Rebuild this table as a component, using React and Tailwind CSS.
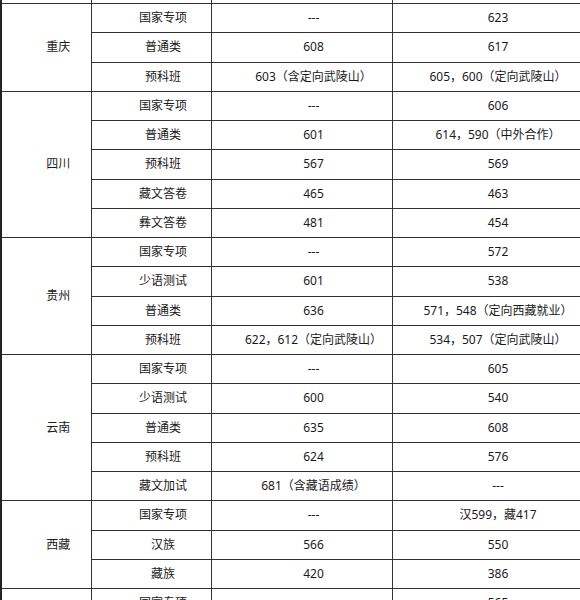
const groups = [
  { name: "", rows: [["", "", ""]] },
  {
    name: "重庆",
    rows: [
      ["国家专项", "---", "623"],
      ["普通类", "608", "617"],
      ["预科班", "603（含定向武陵山）", "605，600（定向武陵山）"],
    ],
  },
  {
    name: "四川",
    rows: [
      ["国家专项", "---", "606"],
      ["普通类", "601", "614，590（中外合作）"],
      ["预科班", "567", "569"],
      ["藏文答卷", "465", "463"],
      ["彝文答卷", "481", "454"],
    ],
  },
  {
    name: "贵州",
    rows: [
      ["国家专项", "---", "572"],
      ["少语测试", "601", "538"],
      ["普通类", "636", "571，548（定向西藏就业）"],
      ["预科班", "622，612（定向武陵山）", "534，507（定向武陵山）"],
    ],
  },
  {
    name: "云南",
    rows: [
      ["国家专项", "---", "605"],
      ["少语测试", "600", "540"],
      ["普通类", "635", "608"],
      ["预科班", "624", "576"],
      ["藏文加试", "681（含藏语成绩）", "---"],
    ],
  },
  {
    name: "西藏",
    rows: [
      ["国家专项", "---", "汉599，藏417"],
      ["汉族", "566", "550"],
      ["藏族", "420", "386"],
    ],
  },
  {
    name: "陕西",
    rows: [
      ["国家专项", "---", "565"],
      ["普通类", "", ""],
      ["预科班", "", ""],
    ],
  },
];

const cell =
  "border border-[#333] text-center align-middle indent-[24px] whitespace-nowrap p-0";

export default function App() {
  return (
    <div className="w-[580px] h-[600px] overflow-hidden bg-white">
      <table className="-mt-[26.25px] w-[580px] table-fixed border-collapse border-l-2 border-r-[3px] border-l-[#222] border-r-[#222] font-['Noto_Sans','Noto_Sans_CJK_SC',sans-serif] text-[12px] leading-none text-[#1a1a1a]">
        <colgroup>
          <col className="w-[90px]" />
          <col className="w-[120px]" />
          <col className="w-[181px]" />
          <col className="w-[189px]" />
        </colgroup>
        <tbody>
          {groups.map((g, gi) =>
            g.rows.map((r, ri) => (
              <tr key={`${gi}-${ri}`} className="h-[29.25px]">
                {ri === 0 && (
                  <td rowSpan={g.rows.length} className={cell}>
                    {g.name}
                  </td>
                )}
                <td className={cell}>{r[0]}</td>
                <td className={cell}>{r[1]}</td>
                <td className={cell}>{r[2]}</td>
              </tr>
            ))
          )}
        </tbody>
      </table>
    </div>
  );
}
